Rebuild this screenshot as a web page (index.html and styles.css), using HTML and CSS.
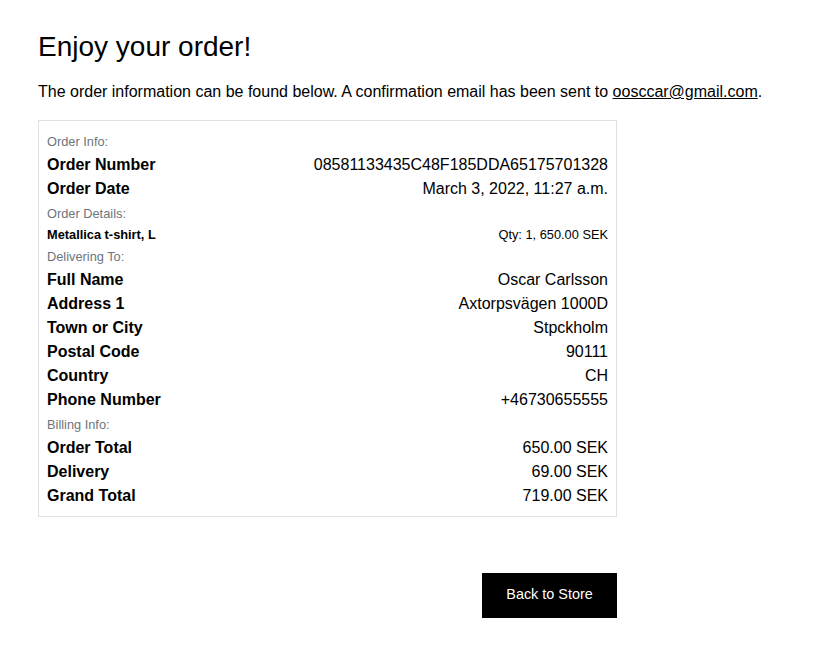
FILE: index.html
```html
<!DOCTYPE html>
<html>
<head>
<meta charset="utf-8">
<link rel="stylesheet" href="styles.css">
</head>
<body>
<main class="page">
  <h1 class="title">Enjoy your order!</h1>
  <p class="lead">The order information can be found below. A confirmation email has been sent to <a class="mail" href="#">oosccar@gmail.com</a>.</p>
  <div class="wrap">
    <section class="card">
      <div class="label">Order Info:</div>
      <div class="row"><span class="key">Order Number</span><span>08581133435C48F185DDA65175701328</span></div>
      <div class="row"><span class="key">Order Date</span><span>March 3, 2022, 11:27 a.m.</span></div>
      <div class="label details">Order Details:</div>
      <div class="row item"><span class="key">Metallica t-shirt, L</span><span>Qty: 1, 650.00 SEK</span></div>
      <div class="label">Delivering To:</div>
      <div class="row"><span class="key">Full Name</span><span>Oscar Carlsson</span></div>
      <div class="row"><span class="key">Address 1</span><span>Axtorpsvägen 1000D</span></div>
      <div class="row"><span class="key">Town or City</span><span>Stpckholm</span></div>
      <div class="row"><span class="key">Postal Code</span><span>90111</span></div>
      <div class="row"><span class="key">Country</span><span>CH</span></div>
      <div class="row"><span class="key">Phone Number</span><span>+46730655555</span></div>
      <div class="label billing">Billing Info:</div>
      <div class="row"><span class="key">Order Total</span><span>650.00 SEK</span></div>
      <div class="row"><span class="key">Delivery</span><span>69.00 SEK</span></div>
      <div class="row"><span class="key">Grand Total</span><span>719.00 SEK</span></div>
    </section>
    <div class="actions">
      <a class="btn" href="#">Back to Store</a>
    </div>
  </div>
</main>
</body>
</html>
```
FILE: styles.css
```css
* { box-sizing: border-box; }
body {
  margin: 0;
  font-family: "Liberation Sans", Arial, sans-serif;
  color: #000;
  background: #fff;
}
.page {
  padding: 29px 38px 0 38px;
}
.title {
  margin: 0;
  font-size: 28px;
  font-weight: 400;
  line-height: 36px;
}
.lead {
  margin: 16px 0 0 0;
  font-size: 16px;
  line-height: 22px;
}
.mail { color: #000; text-decoration: underline; }
.wrap {
  width: 579px;
  margin-top: 17px;
}
.card {
  border: 1px solid #dee2e6;
  padding: 10px 8px 8px 8px;
}
.label {
  font-size: 12.8px;
  line-height: 22px;
  color: #6c757d;
}
.label.details { padding-top: 2px; line-height: 21px; }
.label.billing { padding-top: 1px; line-height: 23px; }
.row {
  display: flex;
  justify-content: space-between;
  font-size: 16px;
  line-height: 24px;
}
.key { font-weight: 700; }
.row.item {
  font-size: 12.8px;
  line-height: 22px;
}
.actions {
  display: flex;
  justify-content: flex-end;
  margin-top: 56px;
}
.btn {
  display: inline-flex;
  align-items: center;
  justify-content: center;
  width: 135px;
  height: 45px;
  padding-bottom: 3px;
  background: #000;
  color: #fff;
  font-size: 14.4px;
  text-decoration: none;
}
```
